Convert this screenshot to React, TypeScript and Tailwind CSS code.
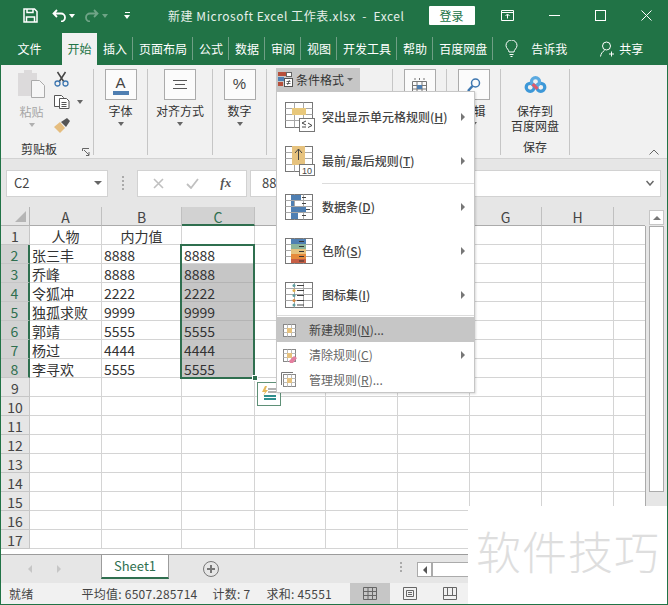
import React from "react";

const CJK = "font-['Noto_Sans_CJK_SC','Noto_Sans',sans-serif]";

const tabs = [
  { label: "插入" },
  { label: "页面布局" },
  { label: "公式" },
  { label: "数据" },
  { label: "审阅" },
  { label: "视图" },
  { label: "开发工具" },
  { label: "帮助" },
  { label: "百度网盘" },
];

const people = [
  ["人物", "内力值", ""],
  ["张三丰", "8888", "8888"],
  ["乔峰", "8888", "8888"],
  ["令狐冲", "2222", "2222"],
  ["独孤求败", "9999", "9999"],
  ["郭靖", "5555", "5555"],
  ["杨过", "4444", "4444"],
  ["李寻欢", "5555", "5555"],
];

const colWidths = ["w-[72px]", "w-[80px]", "w-[73px]", "w-[71px]", "w-[72px]", "w-[72px]", "w-[72px]", "w-[72px]", "w-[33px]"];
const colNames = ["A", "B", "C", "D", "E", "F", "G", "H", ""];

const Caret = ({ className = "" }: { className?: string }) => (
  <span className={`inline-block w-0 h-0 border-x-[3.5px] border-x-transparent border-t-[4px] border-t-[#666] ${className}`} />
);

const SideArrow = () => (
  <span className="w-0 h-0 border-y-[4px] border-y-transparent border-l-[4px] border-l-[#777]" />
);

// little sheet drawn behind most of the menu icons
const SheetLines = () => (
  <g stroke="#777" strokeWidth="1" fill="none">
    <rect x="0.5" y="0.5" width="27" height="25" />
    <path d="M9.5 .5v25M18.5 .5v25M.5 6.5h27M.5 12.5h27M.5 18.5h27" stroke="#a8a8a8" />
  </g>
);

const HighlightIcon = () => (
  <svg width="30" height="30" viewBox="0 0 30 30">
    <SheetLines />
    <rect x="7" y="6" width="14" height="7" fill="#e8c87c" />
    <rect x="14.5" y="16.5" width="15" height="13" fill="#fff" stroke="#777" />
    <path d="M21 19l-4 2 4 2M17 25h4M23 21l4 2.500-4 2" stroke="#444" fill="none" />
  </svg>
);

const TopIcon = () => (
  <svg width="30" height="30" viewBox="0 0 30 30">
    <SheetLines />
    <rect x="7" y="0" width="13" height="19" fill="#e6c27e" />
    <path d="M13.500 14V3M10 7l3.500-4 3.500 4" stroke="#444" fill="none" />
    <rect x="14.500" y="18.500" width="15" height="11" fill="#fff" stroke="#777" />
    <text x="17" y="28" fontSize="9" fill="#444" fontFamily="Liberation Sans">10</text>
  </svg>
);

const BarsIcon = () => (
  <svg width="28" height="26" viewBox="0 0 28 26">
    <SheetLines />
    <g fill="#4f7fb2">
      <rect x="6" y="1" width="10" height="5" />
      <rect x="6" y="7" width="3" height="5" />
      <rect x="6" y="13" width="15" height="5" />
      <rect x="6" y="19" width="7" height="6" />
    </g>
    <path d="M17 3.500h4M17 9.500h4M21 15.500h4M17 21.500h4" stroke="#444" />
  </svg>
);

const ScaleIcon = () => (
  <svg width="28" height="26" viewBox="0 0 28 26">
    <SheetLines />
    <rect x="6" y="1" width="15" height="5" fill="#4f7fb2" />
    <rect x="6" y="6" width="15" height="5" fill="#8db49b" />
    <rect x="6" y="11" width="15" height="5" fill="#e6c27e" />
    <rect x="6" y="16" width="15" height="5" fill="#e58a3c" />
    <rect x="6" y="21" width="15" height="4" fill="#c75f45" />
    <path d="M14 3.500h5M14 8.500h5M14 13.500h5M14 18.500h5M14 23h5" stroke="#333" />
  </svg>
);

const IconSetIcon = () => (
  <svg width="28" height="26" viewBox="0 0 28 26">
    <SheetLines />
    <path d="M12 3.500h7M12 8.500h7M12 13.500h7M12 18.500h7M12 23h7" stroke="#444" />
    <circle cx="9" cy="3.500" r="1.500" fill="#5e9ea0" />
    <circle cx="9" cy="8.500" r="1.500" fill="#e0b050" />
    <circle cx="9" cy="13.500" r="1.500" fill="#5e9ea0" />
    <circle cx="9" cy="18.500" r="1.500" fill="#d88a3c" />
    <circle cx="9" cy="23" r="1.500" fill="#5e9ea0" />
  </svg>
);

const SmallRuleIcon = ({ eraser, frame }: { eraser?: boolean; frame?: boolean }) => (
  <svg width="16" height="16" viewBox="0 0 16 16">
    {frame && <path d="M.5 13V.5H12" stroke="#777" fill="none" />}
    <rect x="2.500" y="2.500" width="12" height="12" fill="#fff" stroke="#888" />
    <path d="M6.500 2.500v12M10.500 2.500v12M2.500 6.500h12M2.500 10.500h12" stroke="#bbb" />
    <rect x="6" y="6" width="5" height="5" fill="#e6c27e" />
    {eraser && <path d="M8 14l5-5 3 2-4 5H9z" fill="#e47f9f" />}
  </svg>
);

const MenuBig = ({ icon, children }: { icon: React.ReactNode; children: React.ReactNode }) => (
  <div className="h-[44px] flex items-center pl-[8px] pr-[9px]">
    <div className="w-[30px] shrink-0">{icon}</div>
    <div className="ml-[7px] flex-1 text-[12px] font-medium text-[#444]">{children}</div>
    <SideArrow />
  </div>
);

const MenuSmall = ({ icon, children, active, arrow, muted }: { icon: React.ReactNode; children: React.ReactNode; active?: boolean; arrow?: boolean; muted?: boolean }) => (
  <div className={`h-[25px] flex items-center pl-[4px] pr-[9px] ${active ? "bg-[#c6c6c6] text-[#333]" : ""} ${muted ? "text-[#666]" : "text-[#444]"}`}>
    <div className="w-[16px] shrink-0">{icon}</div>
    <div className="ml-[12px] flex-1 text-[12px]">{children}</div>
    {arrow && <SideArrow />}
  </div>
);

const RibbonBox = ({ children }: { children: React.ReactNode }) => (
  <div className="w-[32px] h-[31px] border border-[#ababab] bg-[#fbfbfb] flex items-center justify-center">{children}</div>
);

const BigGroup = ({ width, label, children }: { width: string; label?: string; children: React.ReactNode }) => (
  <div className={`${width} h-[86px] border-r border-[#c6c6c6] flex flex-col items-center`}>
    <RibbonBox>{children}</RibbonBox>
    {label && <div className="mt-[2px] text-[12px] leading-[18px] text-[#333]">{label}</div>}
    {label && <Caret className="mt-[2px]" />}
  </div>
);

const GripDots = ({ count }: { count: number }) => (
  <div className="flex flex-col gap-[2px]">
    {Array.from({ length: count }, (_, i) => (
      <div key={i} className="w-[2px] h-[2px] bg-[#aaa]" />
    ))}
  </div>
);

export default function App() {
  return (
    <div className={`relative w-[668px] h-[605px] overflow-hidden bg-white border-x border-b border-[#217346] flex flex-col ${CJK}`}>
      {/* title bar */}
      <div className="h-[33px] shrink-0 bg-[#217346] flex items-center pb-[2px] text-white">
        <svg className="ml-[22px]" width="15" height="15" viewBox="0 0 15 15" fill="none" stroke="#fff" strokeWidth="1.500">
          <path d="M1 1h10.500L14 3.500V14H1z" />
          <path d="M4 1v3.500h6V1M3.500 14V9h8v5" />
        </svg>
        <svg className="ml-[14px]" width="15" height="13" viewBox="0 0 15 13" fill="none" stroke="#fff" strokeWidth="1.800">
          <path d="M5 1L1.500 4.500 5 8M2 4.500h7a4 4 0 0 1 0 8" />
        </svg>
        <Caret className="ml-[2px] !border-t-white" />
        <svg className="ml-[9px] opacity-35" width="15" height="13" viewBox="0 0 15 13" fill="none" stroke="#fff" strokeWidth="1.800">
          <path d="M10 1l3.500 3.500L10 8M13 4.500H6a4 4 0 0 0 0 8" />
        </svg>
        <Caret className="ml-[3px] !border-t-white opacity-35" />
        <div className="ml-[16px] flex flex-col items-center gap-[2px]">
          <div className="w-[5px] h-[1px] bg-white" />
          <Caret className="!border-t-white !border-x-[3px]" />
        </div>
        <div className="ml-[38px] text-[12px] tracking-[0.55px] whitespace-pre text-[#e6f0ea]">新建 Microsoft Excel 工作表.xlsx  -  Excel</div>
        <div className="ml-[24px] w-[46px] h-[19px] bg-white rounded-[1px] text-[#217346] text-[12px] flex items-center justify-center">登录</div>
        <svg className="ml-[26px]" width="13" height="11" viewBox="0 0 13 11" fill="none" stroke="#fff">
          <path d="M.5.500h12v10H.5zM.5 2.500h12M6.500 8.500V4.500M4.500 6l2-2 2 2" />
        </svg>
        <div className="ml-[35px] w-[11px] h-[1px] bg-white" />
        <div className="ml-[35px] w-[11px] h-[11px] border border-white" />
        <svg className="ml-[35px]" width="11" height="11" viewBox="0 0 11 11" stroke="#fff">
          <path d="M.5.500l10 10M10.500.500l-10 10" />
        </svg>
      </div>

      {/* tabs */}
      <div className="h-[32px] shrink-0 bg-[#217346] flex items-stretch pb-[1px] text-white text-[12px]">
        <div className="w-[61px] flex items-center justify-center pr-[4px]">文件</div>
        <div className="w-[35px] -mb-[1px] bg-[#f1f1f1] text-[#217346] flex items-center justify-center pb-[1px]">开始</div>
        {tabs.map((tab) => (
          <div key={tab.label} className="flex items-center">
            <div className="pl-[6px] pr-[5px]">{tab.label}</div>
            <div className="w-px h-[23px] bg-[#6f9f85]" />
          </div>
        ))}
        <svg className="ml-[12px] self-center" width="13" height="17" viewBox="0 0 13 17" fill="none" stroke="#fff">
          <path d="M4 12c0-2.500-3-3.500-3-6.500a5.500 5.500 0 0 1 11 0c0 3-3 4-3 6.500zM4.500 14.500h4M5.500 16.500h2" />
        </svg>
        <div className="ml-[13px] flex items-center">告诉我</div>
        <svg className="ml-[33px] self-center" width="14" height="16" viewBox="0 0 14 16" fill="none" stroke="#fff">
          <circle cx="6.500" cy="5" r="4" />
          <path d="M.5 15.500c.5-3 2-5 4-6M9 13h5M11.500 10.500v5" />
        </svg>
        <div className="ml-[5px] flex items-center">共享</div>
      </div>

      {/* ribbon */}
      <div className="h-[93px] shrink-0 bg-[#f1f1f1] relative flex items-start pt-[4px] text-[#333]">
        {/* clipboard group */}
        <div className="w-[93px] h-[86px] border-r border-[#c6c6c6] relative flex">
          <div className="w-[53px] flex flex-col items-center pl-[8px]">
            <svg width="29" height="30" viewBox="0 0 29 30">
              <path d="M1 4h6V1h8v3h5v23H1z" fill="#dcdadb" />
              <path d="M14.500 11.500h8l5 5v12h-13z" fill="#f6f6f6" stroke="#aaa" />
            </svg>
            <div className="mt-[4px] text-[12px] leading-[18px] text-[#a6a6a6]">粘贴</div>
            <Caret className="mt-[2px] !border-t-[#b0b0b0]" />
          </div>
          <div className="flex flex-col pt-[2px]">
            <svg width="15" height="16" viewBox="0 0 15 16" fill="none">
              <path d="M3.500 1l6.500 10M11.500 1L5 11" stroke="#444" strokeWidth="1.500" />
              <circle cx="3.500" cy="12.500" r="2.500" stroke="#3e77b0" strokeWidth="1.300" />
              <circle cx="11.500" cy="12.500" r="2.500" stroke="#3e77b0" strokeWidth="1.300" />
            </svg>
            <div className="mt-[8px] flex items-center">
              <svg width="16" height="14" viewBox="0 0 16 14" fill="#fff" stroke="#555">
                <path d="M.5.500h7l2 2v9h-9z" />
                <path d="M5.500 3.500h7l2.500 2.500v7.500H5.500z" />
                <path d="M7.500 7.500h5M7.500 9.500h5M7.500 11.500h5" />
              </svg>
              <Caret className="ml-[7px]" />
            </div>
            <svg className="mt-[9px]" width="16" height="15" viewBox="0 0 16 15">
              <path d="M0 9l6-5 5 6-5 5z" fill="#e5bd7f" />
              <path d="M7 4l6-4 3 3-4 6z" fill="#555" />
            </svg>
          </div>
          <div className="absolute left-[20px] top-[71px] text-[12px] leading-[18px]">剪贴板</div>
          <svg className="absolute left-[81px] top-[79px]" width="8" height="8" viewBox="0 0 8 8" fill="none" stroke="#666">
            <path d="M.5 3V.5H7M2 2l5 5M7 4v3.500H4" />
          </svg>
        </div>

        <BigGroup width="w-[54px]" label="字体">
          <div className="flex flex-col items-center">
            <span className="text-[15px] leading-[15px] font-['Liberation_Sans'] text-[#444]">A</span>
            <span className="w-[16px] h-[4px] mt-[1px] bg-[#4f7fb2]" />
          </div>
        </BigGroup>
        <BigGroup width="w-[65px]" label="对齐方式">
          <svg width="14" height="9" viewBox="0 0 14 9" stroke="#555">
            <path d="M0 .5h14M2 4.500h10M0 8.500h14" />
          </svg>
        </BigGroup>
        <BigGroup width="w-[54px]" label="数字">
          <span className="text-[15px] font-['Liberation_Sans'] text-[#444]">%</span>
        </BigGroup>

        {/* styles group, mostly hidden by the open menu */}
        <div className="w-[126px] h-[86px] border-r border-[#c6c6c6]" />

        <BigGroup width="w-[54px]">
          <svg width="15" height="16" viewBox="0 0 15 16" fill="none" stroke="#777">
            <path d="M.5 4.500h14v11H.5zM.5 8.500h14M.5 12h14M5 4.500v11M10 4.500v11M3 1v2M7.500 1v2M12 1v2" />
            <rect x="5" y="8" width="5" height="4" fill="#4f7fb2" stroke="none" />
          </svg>
        </BigGroup>
        <BigGroup width="w-[54px]" label="编辑">
          <svg width="14" height="14" viewBox="0 0 14 14" fill="none">
            <circle cx="8.500" cy="5" r="4" stroke="#3e77b0" strokeWidth="1.500" />
            <path d="M5.500 8L1 13" stroke="#3e77b0" strokeWidth="2.500" />
          </svg>
        </BigGroup>

        {/* baidu save group */}
        <div className="w-[69px] h-[86px] border-r border-[#c6c6c6] flex flex-col items-center">
          <svg className="mt-[7px]" width="27" height="21" viewBox="0 0 27 21" fill="none" strokeWidth="4">
            <circle cx="7" cy="14" r="5" stroke="#3d98d8" />
            <circle cx="20" cy="14" r="5" stroke="#3d98d8" />
            <circle cx="13.500" cy="7" r="5" stroke="#5aa9e0" />
            <path d="M10 10l6 6" stroke="#df5a6c" />
          </svg>
          <div className="mt-[10px] text-[12px] leading-[15px] text-center">保存到<br />百度网盘</div>
          <div className="mt-[6px] text-[12px] leading-[16px]">保存</div>
        </div>
        <svg className="absolute right-[8px] top-[84px]" width="10" height="6" viewBox="0 0 10 6" fill="none" stroke="#666">
          <path d="M.5 5.500L5 1l4.500 4.500" />
        </svg>
      </div>

      {/* formula bar */}
      <div className="h-[49px] shrink-0 bg-[#e6e6e6] border-t border-[#d2d2d2] flex items-center pl-[5px] pr-[6px]">
        <div className="w-[102px] h-[27px] bg-white border border-[#d2d2d2] flex items-center justify-between pl-[7px] pr-[5px] text-[13px] text-[#444]">
          <span>C2</span>
          <Caret className="!border-x-[4px] !border-t-[4px]" />
        </div>
        <div className="ml-[14px]">
          <GripDots count={4} />
        </div>
        <div className="ml-[13px] w-[110px] h-[27px] bg-white border border-[#d2d2d2] flex items-center justify-around px-[4px]">
          <svg width="11" height="11" viewBox="0 0 11 11" stroke="#c0c0c0" strokeWidth="1.600">
            <path d="M1 1l9 9M10 1l-9 9" />
          </svg>
          <svg width="13" height="11" viewBox="0 0 13 11" fill="none" stroke="#c0c0c0" strokeWidth="1.800">
            <path d="M1 6l4 4 7-9" />
          </svg>
          <span className="font-['Liberation_Serif'] italic font-bold text-[13px] text-[#555]">fx</span>
        </div>
        <div className="ml-[3px] flex-1 h-[27px] bg-white border border-[#d2d2d2] flex items-center justify-between pl-[11px] pr-[6px] text-[13px] text-[#444]">
          <span>8888</span>
          <svg width="8" height="6" viewBox="0 0 8 6" fill="none" stroke="#666" strokeWidth="1.500">
            <path d="M.5 1L4 5l3.500-4" />
          </svg>
        </div>
      </div>

      {/* sheet area */}
      <div className="relative flex-1 min-h-0 flex flex-col overflow-hidden">
        <div className="h-[19px] shrink-0 flex bg-[#e6e6e6] text-[14px] text-[#444]">
          <div className="w-[29px] border-r border-b border-[#b5b5b5] relative">
            <span className="absolute right-[3px] bottom-[3px] w-0 h-0 border-l-[11px] border-l-transparent border-b-[11px] border-b-[#b5b5b5]" />
          </div>
          {colNames.map((col, i) => (
            <div
              key={col + i}
              className={`${colWidths[i]} shrink-0 flex items-center justify-center pt-[2px] border-r border-b border-[#c0c0c0] border-b-[#ababab] leading-none ${col === "C" ? "bg-[#d2d2d2] !border-b-2 !border-b-[#2f6f4f] text-[#2f6f4f]" : ""}`}
            >
              {col}
            </div>
          ))}
        </div>
        {Array.from({ length: 17 }, (_, r) => (
          <div key={r} className="h-[19px] shrink-0 flex text-[14px] leading-[18px] text-[#333]">
            <div className={`w-[29px] shrink-0 pt-[1px] border-r border-b border-[#c6c6c6] flex items-center justify-center ${r >= 1 && r <= 7 ? "bg-[#d2d2d2] text-[#2f6f4f] border-r-2 border-r-[#2f6f4f]" : "bg-[#e6e6e6] text-[#444]"}`}>
              {r + 1}
            </div>
            {colWidths.map((w, c) => (
              <div
                key={c}
                className={`${w} shrink-0 pt-[1px] border-r border-b border-[#d4d4d4] px-[2px] flex items-center overflow-hidden whitespace-nowrap ${r === 0 ? "justify-center" : ""} ${c === 2 && r >= 2 && r <= 7 ? "bg-[#c6c6c6] !border-[#b4b4b4]" : ""}`}
              >
                {r < people.length && c < 3 ? people[r][c] : ""}
              </div>
            ))}
          </div>
        ))}

        {/* vertical scrollbar */}
        <div className="absolute right-0 top-0 bottom-[4px] w-[22px] bg-[#e6e6e6] flex flex-col items-center pt-[3px] pl-[1px]">
          <div className="absolute left-0 top-[19px] bottom-0 w-px bg-[#ababab]" />
          <div className="w-[15px] h-[15px] bg-white border border-[#c6c6c6] flex items-center justify-center">
            <span className="w-0 h-0 border-x-[4px] border-x-transparent border-b-[4px] border-b-[#777]" />
          </div>
          <div className="mt-[1px] w-[15px] h-[266px] bg-white border border-[#ababab]" />
        </div>

        {/* selection frame */}
        <div className="absolute left-[179px] top-[37px] w-[75px] h-[135px] border-2 border-[#2f6f4f]" />
        <div className="absolute left-[251px] top-[168px] w-[6px] h-[6px] bg-[#2f6f4f] border border-white" />

        {/* quick analysis button */}
        <div className="absolute left-[256px] top-[175px] w-[24px] h-[24px] bg-white border border-[#5f9077] flex items-center justify-center">
          <svg width="16" height="16" viewBox="0 0 16 16" fill="none">
            <path d="M4 0L1 6h3L2 10l5-6H4.500L6 0z" fill="#e6b95c" />
            <path d="M7 3h8M7 6h8" stroke="#666" />
            <path d="M3 10h12M3 13h12" stroke="#2f8f8f" strokeWidth="2" />
          </svg>
        </div>
      </div>

      {/* sheet tabs */}
      <div className="h-[29px] shrink-0 bg-[#e6e6e6] border-t border-[#9c9c9c] flex items-start relative">
        <span className="absolute left-[27px] top-[10px] w-0 h-0 border-y-[4px] border-y-transparent border-r-[4px] border-r-[#c6c6c6]" />
        <span className="absolute left-[56px] top-[10px] w-0 h-0 border-y-[4px] border-y-transparent border-l-[4px] border-l-[#c6c6c6]" />
        <div className="ml-[100px] w-[68px] h-[24px] bg-white border-b-2 border-x border-x-[#9c9c9c] border-b-[#2f6f4f] text-[#2f6f4f] text-[13px] flex items-center justify-center">
          Sheet1
        </div>
        <svg className="ml-[34px] mt-[6px]" width="16" height="16" viewBox="0 0 16 16" fill="none" stroke="#777">
          <circle cx="8" cy="8" r="7.500" />
          <path d="M8 4v8M4 8h8" strokeWidth="2" />
        </svg>
        <div className="ml-[181px] mt-[7px]">
          <GripDots count={3} />
        </div>
        <div className="ml-[15px] mt-[7px] w-[15px] h-[15px] bg-white border border-[#ababab] flex items-center justify-center">
          <span className="w-0 h-0 border-y-[4px] border-y-transparent border-r-[4px] border-r-[#555]" />
        </div>
        <div className="mt-[7px] flex-1 h-[15px] bg-white border border-[#ababab]" />
      </div>

      {/* status bar */}
      <div className="h-[21px] shrink-0 bg-[#f1f1f1] flex items-center text-[12px] tracking-[0.25px] text-[#444]">
        <span className="ml-[8px]">就绪</span>
        <span className="ml-[48px]">平均值: 6507.285714</span>
        <span className="ml-[15px]">计数: 7</span>
        <span className="ml-[16px]">求和: 45551</span>
        <div className="ml-[18px] w-[40px] h-full bg-[#c6c6c6] flex items-center justify-center">
          <svg width="14" height="13" viewBox="0 0 14 13" fill="none" stroke="#666">
            <path d="M.5.500h13v12H.5zM.5 4.500h13M.5 8.500h13M5 .5v12M9.500 .5v12" />
          </svg>
        </div>
        <div className="w-[40px] flex items-center justify-center">
          <svg width="14" height="13" viewBox="0 0 14 13" fill="none" stroke="#666">
            <path d="M.5.500h13v12H.5zM3.500 3.500h7v6h-7zM5 5.500h4M5 7.500h4" />
          </svg>
        </div>
        <div className="w-[40px] flex items-center justify-center">
          <svg width="14" height="13" viewBox="0 0 14 13" fill="none" stroke="#666">
            <path d="M.5.500h13v12H.5zM.5 8.500h13M4.500 .5v8M9.500 .5v8" />
          </svg>
        </div>
      </div>

      {/* watermark patch */}
      <div className="absolute left-[467px] top-[506px] right-[-1px] bottom-[-1px] bg-white flex items-center justify-center pb-[10px] text-[45px] font-light leading-none text-[#dedede] tracking-[1px]">
        软件技巧
      </div>

      {/* open conditional format button and menu */}
      <div className="absolute left-[275px] top-[68px] w-[84px] h-[23px] bg-[#c6c6c6] flex items-center pl-[2px] text-[12px] text-[#333]">
        <svg width="15" height="15" viewBox="0 0 15 15">
          <rect x="0" y="0" width="8" height="4" fill="#b6503c" />
          <rect x="0" y="5" width="6" height="4" fill="#4f7fb2" />
          <rect x="0" y="10" width="5" height="4" fill="#b6503c" />
          <rect x="8.500" y="0.500" width="5" height="4" fill="#fff" stroke="#666" />
          <rect x="6.500" y="6.500" width="8" height="8" fill="#fff" stroke="#555" />
          <path d="M8.500 9.500h4M8.500 11.500h4M11.500 8l-2 5" stroke="#333" strokeWidth="0.700" />
        </svg>
        <span className="ml-[3px]">条件格式</span>
        <Caret className="ml-[3px] !border-x-[3px] !border-t-[3px]" />
      </div>
      <div className="absolute left-[275px] top-[91px] w-[199px] h-[302px] bg-white border border-[#c6c6c6] shadow-[1px_1px_2px_rgba(0,0,0,0.15)] pt-[3px]">
        <MenuBig icon={<HighlightIcon />}>突出显示单元格规则(<u>H</u>)</MenuBig>
        <MenuBig icon={<TopIcon />}>最前/最后规则(<u>T</u>)</MenuBig>
        <div className="ml-[45px] h-px bg-[#dcdcdc]" />
        <div className="h-px" />
        <MenuBig icon={<BarsIcon />}>数据条(<u>D</u>)</MenuBig>
        <MenuBig icon={<ScaleIcon />}>色阶(<u>S</u>)</MenuBig>
        <MenuBig icon={<IconSetIcon />}>图标集(<u>I</u>)</MenuBig>
        <div className="-mt-[2px] h-px bg-[#dcdcdc]" />
        <div className="h-px" />
        <MenuSmall active icon={<SmallRuleIcon />}>新建规则(<u>N</u>)...</MenuSmall>
        <MenuSmall arrow muted icon={<SmallRuleIcon eraser />}>清除规则(<u>C</u>)</MenuSmall>
        <MenuSmall muted icon={<SmallRuleIcon frame />}>管理规则(<u>R</u>)...</MenuSmall>
      </div>
    </div>
  );
}
